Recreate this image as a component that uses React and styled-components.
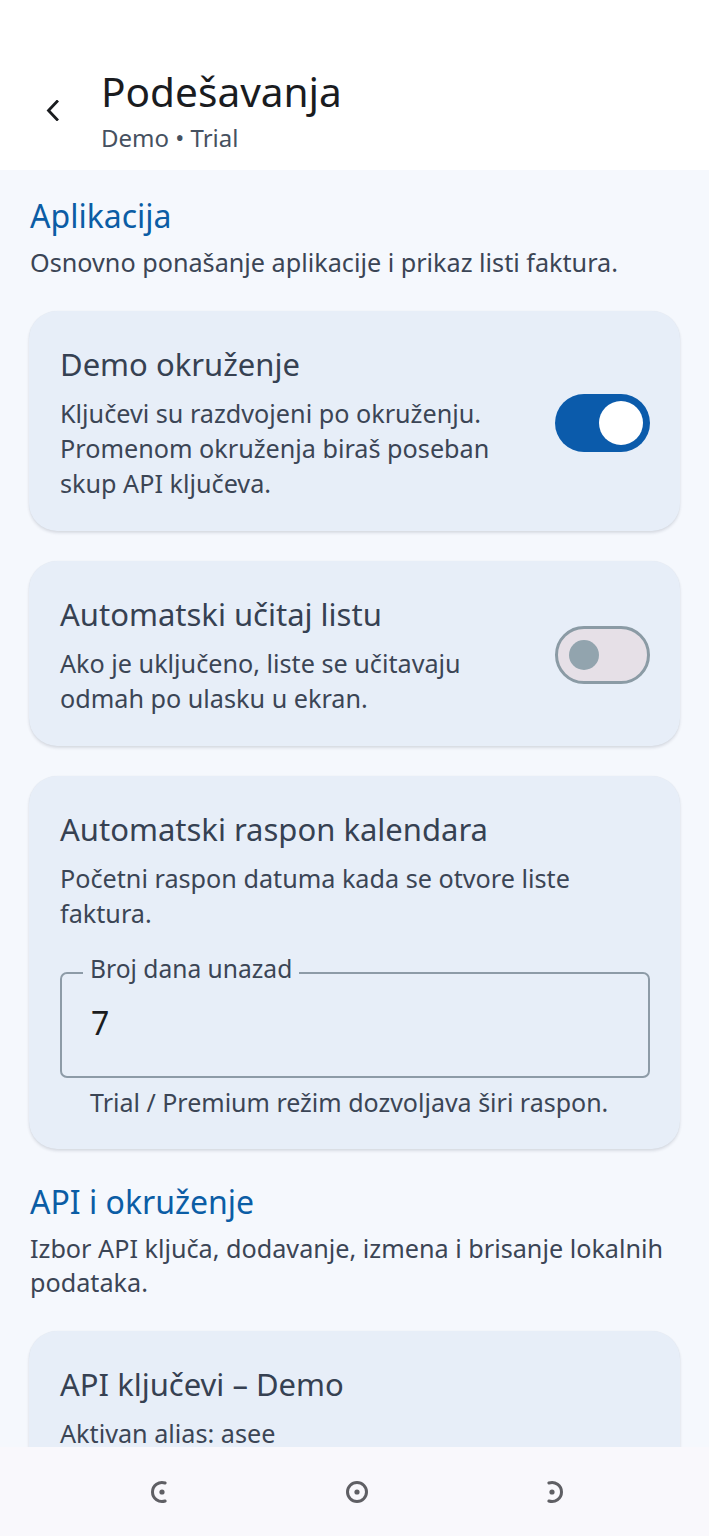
import React from "react";
import styled, { createGlobalStyle } from "styled-components";

const GlobalStyle = createGlobalStyle`
  *, *::before, *::after { box-sizing: border-box; }
  html, body { margin: 0; padding: 0; }
  body {
    font-family: "Noto Sans", "Open Sans", sans-serif;
    background: #ffffff;
    -webkit-font-smoothing: antialiased;
  }
`;

const Screen = styled.div`
  width: 100%;
  height: 100vh;
  display: flex;
  flex-direction: column;
  overflow: hidden;
  background: #f5f8fd;
`;

const Header = styled.header`
  flex: none;
  display: flex;
  align-items: center;
  gap: 25px;
  padding: 68px 0 17px 28px;
  background: #ffffff;
`;

const BackButton = styled.button`
  width: 48px;
  height: 48px;
  display: flex;
  align-items: center;
  justify-content: center;
  border: none;
  background: transparent;
  padding: 0;
  color: #1a1c1f;
`;

const TitleBlock = styled.div`
  display: flex;
  flex-direction: column;
  gap: 7px;
`;

const Title = styled.h1`
  margin: 0;
  font-size: 40.6px;
  line-height: 48px;
  font-weight: 400;
  color: #1a1c1f;
`;

const Subtitle = styled.div`
  font-size: 24px;
  line-height: 30px;
  color: #465160;
`;

const Content = styled.main`
  flex: 1;
  min-height: 0;
  overflow: hidden;
  padding: 26px 29px 0;
  display: flex;
  flex-direction: column;
  gap: 33px;
`;

const Section = styled.section`
  display: flex;
  flex-direction: column;
`;

const SectionTitle = styled.h2`
  margin: 0 0 0 1px;
  font-size: 32px;
  line-height: 40px;
  font-weight: 400;
  color: #0b5da5;
`;

const SectionText = styled.p`
  margin: 9px 0 0 1px;
  font-size: 25.2px;
  line-height: 34px;
  color: #3b4555;
`;

const CardList = styled.div`
  margin-top: 32px;
  display: flex;
  flex-direction: column;
  gap: 30px;
`;

const Card = styled.div`
  background: #e7eef8;
  border-radius: 28px;
  padding: 33px 30px 30px 31px;
  box-shadow: 0 2px 3px rgba(40, 50, 70, 0.14), 0 0 1px rgba(40, 50, 70, 0.08);
`;

const CardRow = styled.div`
  display: flex;
  align-items: center;
  gap: 30px;
`;

const CardBody = styled.div`
  flex: 1;
  min-width: 0;
  display: flex;
  flex-direction: column;
  gap: 12px;
`;

const CardTitle = styled.h3`
  margin: 0;
  font-size: 31px;
  line-height: 40px;
  font-weight: 400;
  color: #364152;
`;

const CardText = styled.p`
  margin: 0;
  font-size: 25.2px;
  line-height: 35px;
  color: #3b4555;
`;

const Switch = styled.button`
  flex: none;
  width: 95px;
  height: 58px;
  border-radius: 29px;
  display: flex;
  align-items: center;
  justify-content: ${(p) => (p.$on ? "flex-end" : "flex-start")};
  padding: 0 ${(p) => (p.$on ? 7 : 11)}px;
  background: ${(p) => (p.$on ? "#0b5bab" : "#e6e0e7")};
  border: ${(p) => (p.$on ? "none" : "3px solid #8b9ba5")};
  cursor: pointer;
`;

const Thumb = styled.span`
  display: block;
  width: ${(p) => (p.$on ? 44 : 30)}px;
  height: ${(p) => (p.$on ? 44 : 30)}px;
  border-radius: 50%;
  background: ${(p) => (p.$on ? "#ffffff" : "#92a4ae")};
`;

const Field = styled.fieldset`
  margin: 24px 0 0;
  min-width: 0;
  border: 2px solid #8d9ba7;
  border-radius: 7px;
  padding: 12px 28px 33px 29px;
`;

const Legend = styled.legend`
  margin-left: -8px;
  padding: 0 7px 8px;
  font-size: 24.6px;
  line-height: 28px;
  color: #3b4555;
`;

const FieldValue = styled.div`
  font-size: 32px;
  line-height: 40px;
  color: #1b1c20;
`;

const Helper = styled.div`
  margin-top: 7px;
  padding-left: 30px;
  font-size: 25px;
  line-height: 34px;
  color: #3b4555;
`;

const NavBar = styled.nav`
  flex: none;
  height: 89px;
  background: #f9f8fc;
  display: flex;
  align-items: center;
  justify-content: center;
  gap: 171px;
  padding-left: 5px;
  color: #5f5f64;
`;

const NavIcon = styled.svg`
  display: block;
  width: 24px;
  height: 24px;
`;

function Chevron() {
  return (
    <svg width="13" height="21" viewBox="0 0 13 21" fill="none">
      <polyline
        points="11,1.5 2.5,10.5 11,19.5"
        stroke="currentColor"
        strokeWidth="2.8"
        strokeLinecap="square"
        strokeLinejoin="miter"
      />
    </svg>
  );
}

function Toggle({ on }) {
  return (
    <Switch $on={on} role="switch" aria-checked={on}>
      <Thumb $on={on} />
    </Switch>
  );
}

const R = 9.5;
const ang = (71 * Math.PI) / 180;
const ex = 12 + R * Math.cos(ang);
const eyTop = 12 - R * Math.sin(ang);
const eyBot = 12 + R * Math.sin(ang);
const lx = 12 - R * Math.cos(ang);

function BackGesture() {
  return (
    <NavIcon viewBox="0 0 24 24" fill="none">
      <path
        d={`M${ex} ${eyTop} A${R} ${R} 0 1 0 ${ex} ${eyBot}`}
        stroke="currentColor"
        strokeWidth="3"
        strokeLinecap="round"
      />
      <circle cx="12" cy="12" r="2.6" fill="currentColor" />
    </NavIcon>
  );
}

function HomeGesture() {
  return (
    <NavIcon viewBox="0 0 24 24" fill="none">
      <circle cx="12" cy="12" r={R} stroke="currentColor" strokeWidth="3" />
      <circle cx="12" cy="12" r="2.6" fill="currentColor" />
    </NavIcon>
  );
}

function RecentGesture() {
  return (
    <NavIcon viewBox="0 0 24 24" fill="none">
      <path
        d={`M${lx} ${eyTop} A${R} ${R} 0 1 1 ${lx} ${eyBot}`}
        stroke="currentColor"
        strokeWidth="3"
        strokeLinecap="round"
      />
      <circle cx="12" cy="12" r="2.6" fill="currentColor" />
    </NavIcon>
  );
}

export default function App() {
  return (
    <>
      <GlobalStyle />
      <Screen>
        <Header>
          <BackButton aria-label="Nazad">
            <Chevron />
          </BackButton>
          <TitleBlock>
            <Title>Podešavanja</Title>
            <Subtitle>Demo • Trial</Subtitle>
          </TitleBlock>
        </Header>

        <Content>
          <Section>
            <SectionTitle>Aplikacija</SectionTitle>
            <SectionText>Osnovno ponašanje aplikacije i prikaz listi faktura.</SectionText>
            <CardList>
              <Card>
                <CardRow>
                  <CardBody>
                    <CardTitle>Demo okruženje</CardTitle>
                    <CardText>
                      Ključevi su razdvojeni po okruženju. Promenom okruženja biraš poseban skup API ključeva.
                    </CardText>
                  </CardBody>
                  <Toggle on />
                </CardRow>
              </Card>

              <Card>
                <CardRow>
                  <CardBody>
                    <CardTitle>Automatski učitaj listu</CardTitle>
                    <CardText>Ako je uključeno, liste se učitavaju odmah po ulasku u ekran.</CardText>
                  </CardBody>
                  <Toggle on={false} />
                </CardRow>
              </Card>

              <Card>
                <CardBody>
                  <CardTitle>Automatski raspon kalendara</CardTitle>
                  <CardText>Početni raspon datuma kada se otvore liste faktura.</CardText>
                </CardBody>
                <Field>
                  <Legend>Broj dana unazad</Legend>
                  <FieldValue>7</FieldValue>
                </Field>
                <Helper>Trial / Premium režim dozvoljava širi raspon.</Helper>
              </Card>
            </CardList>
          </Section>

          <Section>
            <SectionTitle>API i okruženje</SectionTitle>
            <SectionText>Izbor API ključa, dodavanje, izmena i brisanje lokalnih podataka.</SectionText>
            <CardList>
              <Card>
                <CardBody>
                  <CardTitle>API ključevi – Demo</CardTitle>
                  <CardText>Aktivan alias: asee</CardText>
                </CardBody>
              </Card>
            </CardList>
          </Section>
        </Content>

        <NavBar>
          <BackGesture />
          <HomeGesture />
          <RecentGesture />
        </NavBar>
      </Screen>
    </>
  );
}
